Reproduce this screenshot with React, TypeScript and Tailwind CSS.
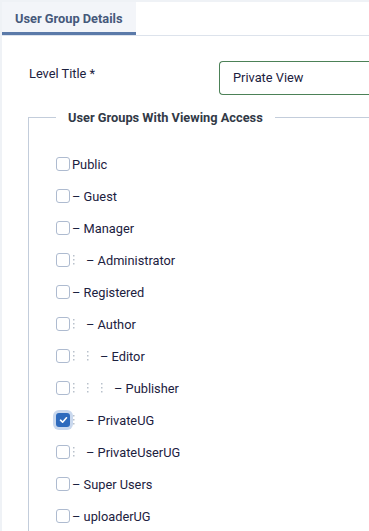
import React from 'react';

type Group = { name: string; level: number; checked?: boolean };

const groups: Group[] = [
  { name: 'Public', level: 0 },
  { name: 'Guest', level: 1 },
  { name: 'Manager', level: 1 },
  { name: 'Administrator', level: 2 },
  { name: 'Registered', level: 1 },
  { name: 'Author', level: 2 },
  { name: 'Editor', level: 3 },
  { name: 'Publisher', level: 4 },
  { name: 'PrivateUG', level: 2, checked: true },
  { name: 'PrivateUserUG', level: 2 },
  { name: 'Super Users', level: 1 },
  { name: 'uploaderUG', level: 1 },
];

const Dots = () => (
  <span className="inline-flex w-[14px] shrink-0 items-center">
    <svg width="2" height="10" viewBox="0 0 2 10" className="ml-[1px]">
      <rect x="0" y="0" width="1.5" height="1.5" fill="#b9c1cc" />
      <rect x="0" y="4" width="1.5" height="1.5" fill="#b9c1cc" />
      <rect x="0" y="8" width="1.5" height="1.5" fill="#b9c1cc" />
    </svg>
  </span>
);

const Checkbox = ({ checked }: { checked?: boolean }) =>
  checked ? (
    <span className="flex h-[14px] w-[14px] shrink-0 items-center justify-center rounded-[3px] bg-[#2f6bbd] ring-[3px] ring-[#c9d8ee]">
      <svg width="9" height="8" viewBox="0 0 9 8">
        <path d="M1.5 4.2 L3.6 6.2 L7.5 1.8" stroke="white" strokeWidth="1.6" fill="none" strokeLinecap="round" strokeLinejoin="round" />
      </svg>
    </span>
  ) : (
    <span className="h-[14px] w-[14px] shrink-0 rounded-[3px] border border-[#aebbd0] bg-white" />
  );

export default function App() {
  return (
    <div className="min-h-screen bg-[#eff2f6] pl-[2px] pt-[2px] text-[12.8px] text-[#1c2140]" style={{ fontFamily: 'Roboto, "Liberation Sans", sans-serif' }}>
      <div className="min-h-[529px] bg-white">
        <div className="flex border-b border-[#dde3ec] bg-white">
          <div className="flex h-[33px] items-center border-b-[3px] border-[#5b7aa9] bg-[#f3f5f9] px-[13px] pt-[3px] font-bold text-[#46597b]">
            User Group Details
          </div>
        </div>

        <div className="pl-[26px] pt-[25px]">
          <div className="flex items-start">
            <label className="w-[191px] pt-[3px] pl-[1px]">Level Title *</label>
            <div className="flex h-[34px] flex-1 items-center rounded-l-[4px] border border-r-0 border-[#4c8157] pl-[13px]">
              Private View
            </div>
          </div>

          <fieldset className="mt-[13px] border-0 border-l border-t border-[#c3cddb] pb-[10px] pl-[27px]">
            <legend className="px-[12px] font-bold text-[#323a47]">User Groups With Viewing Access</legend>
            <div className="flex flex-col pt-[21px]">
              {groups.map((g) => (
                <div key={g.name} className="flex h-[32px] items-center">
                  <Checkbox checked={g.checked} />
                  <span className="ml-[2px] flex items-center">
                    {Array.from({ length: Math.max(0, g.level - 1) }).map((_, i) => (
                      <Dots key={i} />
                    ))}
                    <span>{g.level > 0 ? `\u2013 ${g.name}` : g.name}</span>
                  </span>
                </div>
              ))}
            </div>
          </fieldset>
        </div>
      </div>
    </div>
  );
}
